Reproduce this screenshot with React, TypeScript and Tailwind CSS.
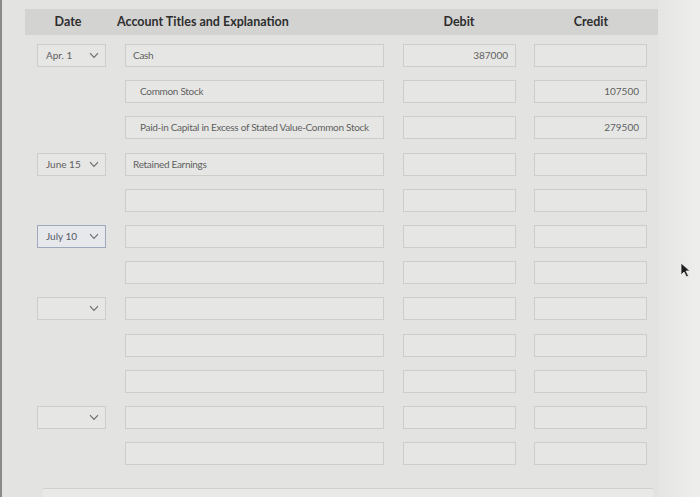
import React from "react";

type Row = {
  date?: string | null; // undefined = no select, null = empty select
  account?: string;
  indent?: boolean;
  debit?: string;
  credit?: string;
  focused?: boolean;
};

const rows: Row[] = [
  { date: "Apr. 1", account: "Cash", debit: "387000" },
  { account: "Common Stock", indent: true, credit: "107500" },
  { account: "Paid-in Capital in Excess of Stated Value-Common Stock", indent: true, credit: "279500" },
  { date: "June 15", account: "Retained Earnings" },
  {},
  { date: "July 10", focused: true },
  {},
  { date: null },
  {},
  {},
  { date: null },
  {},
];

const Chevron = () => (
  <svg width="10" height="7" viewBox="0 0 10 7" fill="none">
    <path d="M1 1.2 L5 5.4 L9 1.2" stroke="#6f6f6f" strokeWidth="1.2" />
  </svg>
);

export default function App() {
  return (
    <div
      className="relative w-[700px] h-[497px] overflow-hidden bg-[#e3e4e1] text-[#5f5f5f]"
      style={{ fontFamily: "Lato, 'Open Sans', sans-serif" }}
    >
      <div className="absolute left-0 top-0 h-full w-[2px] bg-[#8a8a8a]" />
      <div className="absolute right-0 top-0 h-full w-[42px] bg-gradient-to-r from-[#e5e6e3] to-[#eeeeec]" />

      <div className="flex flex-col pt-[9px] pl-[25px]">
        <div className="flex h-[26px] w-[633px] items-center bg-[#d3d3d2] text-[12.5px] font-bold text-[#2e2e2e]">
          <div className="w-[86px] shrink-0 text-center">Date</div>
          <div className="ml-[6px] w-[280px] shrink-0">Account Titles and Explanation</div>
          <div className="ml-[14px] w-[96px] shrink-0 text-center">Debit</div>
          <div className="ml-[34px] w-[100px] shrink-0 text-center">Credit</div>
        </div>

        <div className="mt-[9px] flex flex-col gap-[13.2px]">
          {rows.map((r, i) => (
            <div key={i} className="flex h-[23px] items-stretch">
              <div className="ml-[12px] w-[69px]">
                {r.date !== undefined && (
                  <div
                    className={
                      "flex h-full items-center justify-between border pl-[8px] pr-[6px] text-[10px] " +
                      (r.focused
                        ? "border-[#9fa9bd] bg-[#e6e8ec] text-[#555b66]"
                        : "border-[#cdcdcc] bg-[#e6e6e4]")
                    }
                  >
                    <span>{r.date ?? ""}</span>
                    <Chevron />
                  </div>
                )}
              </div>
              <div
                className={
                  "ml-[19px] flex w-[259px] items-center border border-[#cdcdcc] bg-[#e6e7e4] text-[10px] tracking-[-0.3px] " +
                  (r.indent ? "pl-[14px]" : "pl-[7px]")
                }
              >
                {r.account ?? ""}
              </div>
              <div className="ml-[19px] flex w-[113px] items-center justify-end border border-[#cdcdcc] bg-[#e6e7e4] pr-[7px] text-[10px]">
                {r.debit ?? ""}
              </div>
              <div className="ml-[18px] flex w-[113px] items-center justify-end border border-[#cdcdcc] bg-[#e6e7e4] pr-[7px] text-[10px]">
                {r.credit ?? ""}
              </div>
            </div>
          ))}
        </div>

        <div className="ml-[18px] mt-[23px] h-[20px] w-[610px] border-t border-[#d0d0cf] bg-[#e9e9e8]" />
      </div>

      <svg className="absolute left-[680px] top-[262px]" width="12" height="16" viewBox="0 0 12 16">
        <path d="M1 1 L1 13 L4 10 L6.5 15 L8.5 14 L6 9 L10 9 Z" fill="#1e1e1e" stroke="#eeeeee" strokeWidth="0.8" />
      </svg>
    </div>
  );
}
